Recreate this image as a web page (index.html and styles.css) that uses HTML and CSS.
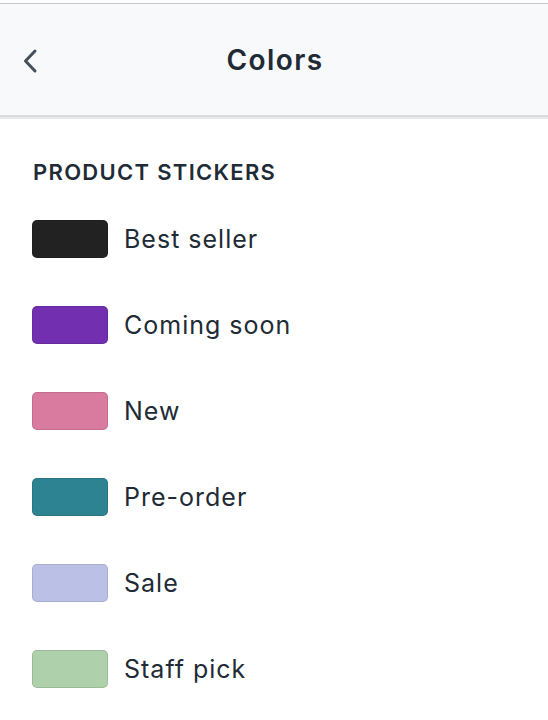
FILE: index.html
```html
<!DOCTYPE html>
<html lang="en">
<head>
<meta charset="utf-8">
<title>Colors</title>
<link rel="stylesheet" href="styles.css">
</head>
<body>
<div class="top-gap"></div>
<header class="header">
  <button class="back" aria-label="Back">
    <svg width="16" height="26" viewBox="0 0 16 26"><path d="M13 3 L3.5 13 L13 23" fill="none" stroke="#454f5b" stroke-width="3" stroke-linecap="round" stroke-linejoin="round"/></svg>
  </button>
  <h1 class="title">Colors</h1>
</header>
<main class="content">
  <h2 class="section-title">PRODUCT STICKERS</h2>
  <ul class="list">
    <li class="item"><span class="swatch sw-best"></span><span class="label">Best seller</span></li>
    <li class="item"><span class="swatch sw-soon"></span><span class="label">Coming soon</span></li>
    <li class="item"><span class="swatch sw-new"></span><span class="label">New</span></li>
    <li class="item"><span class="swatch sw-pre"></span><span class="label">Pre-order</span></li>
    <li class="item"><span class="swatch sw-sale"></span><span class="label">Sale</span></li>
    <li class="item"><span class="swatch sw-staff"></span><span class="label">Staff pick</span></li>
  </ul>
</main>
</body>
</html>
```
FILE: styles.css
```css
* { box-sizing: border-box; }
html, body { margin: 0; padding: 0; background: #ffffff; }
body {
  font-family: Inter, "Noto Sans", "Liberation Sans", sans-serif;
  color: #212b36;
}
.top-gap { height: 3px; background: #ffffff; }
.header {
  height: 114px;
  background: #f8f9fb;
  border-top: 1px solid #c4c6c9;
  border-bottom: 2px solid #d9dbde;
  box-shadow: 0 2px 0 #e7e9eb;
  display: flex;
  align-items: center;
  justify-content: center;
  position: relative;
}
.back {
  position: absolute;
  left: 22px;
  top: 44px;
  border: 0;
  background: none;
  padding: 0;
  display: flex;
}
.title {
  margin: 0;
  font-size: 28px;
  font-weight: 600;
  color: #212b36;
  letter-spacing: 1.4px;
  padding-left: 2px;
}
.content { padding: 42px 0 0 32px; }
.section-title {
  margin: 0 0 0 1px;
  font-size: 22px;
  font-weight: 600;
  letter-spacing: 1.3px;
  line-height: 26px;
}
.list { list-style: none; margin: 35px 0 0; padding: 0; display: flex; flex-direction: column; gap: 48px; }
.item { display: flex; align-items: center; gap: 16px; height: 38px; }
.swatch {
  width: 76px;
  height: 38px;
  border-radius: 5px;
  border: 1px solid rgba(0,0,0,0.1);
  flex: none;
}
.label { font-size: 25px; line-height: 30px; letter-spacing: 1px; color: #212b36; }
.sw-best { background: #222222; }
.sw-soon { background: #7230b1; }
.sw-new { background: #d97a9f; }
.sw-pre { background: #2e8392; }
.sw-sale { background: #bbc0e6; }
.sw-staff { background: #aed0aa; }
```
